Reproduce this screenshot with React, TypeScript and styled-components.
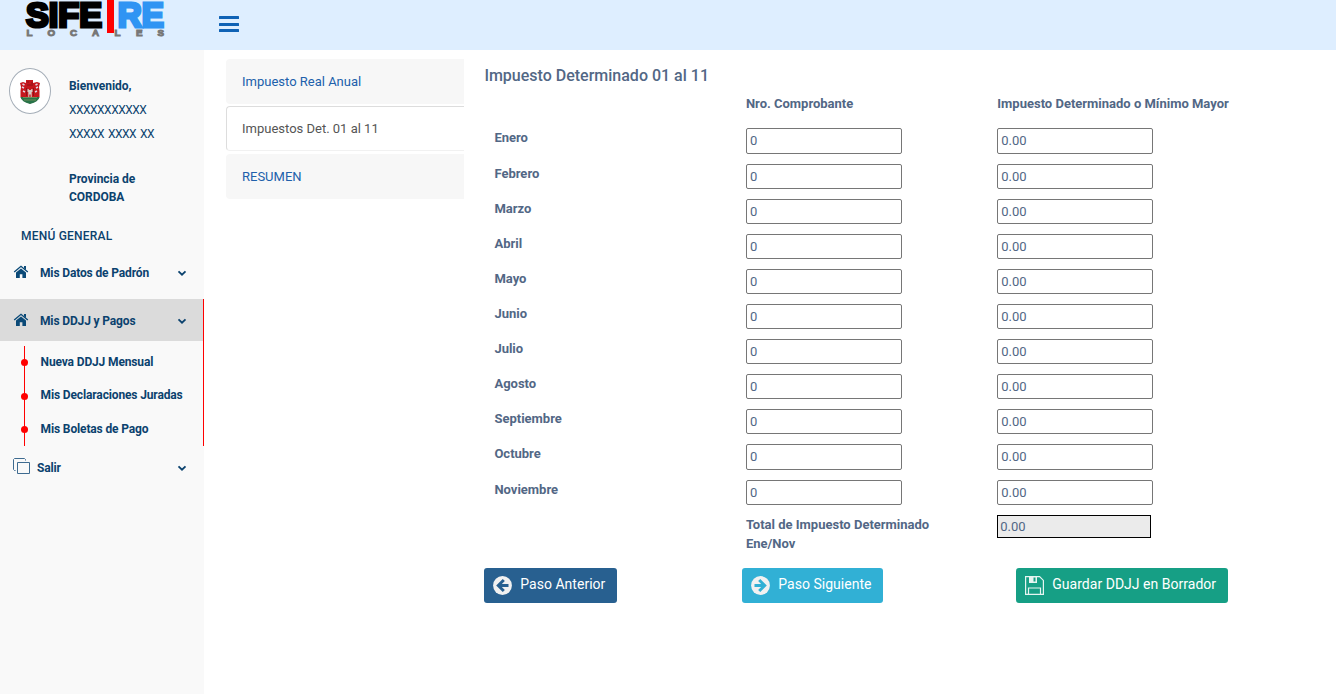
import React from "react";
import styled, { createGlobalStyle, css } from "styled-components";

const Global = createGlobalStyle`
  *, *::before, *::after { box-sizing: border-box; }
  body { margin: 0; background: #fff; font: 13px/19.1px Roboto, "Liberation Sans", sans-serif; color: #526785; }
`;

const Page = styled.div`min-height: 694px; display: flex; flex-direction: column;`;
const TopBar = styled.header`height: 50px; background: #deeeff; display: flex; align-items: flex-start;`;
const LogoBox = styled.div`width: 219.4px; height: 50px; padding-left: 22px; svg { display: block; overflow: visible; }`;
const MenuToggle = styled.button`
  margin-top: 16px; width: 20px; height: 17px; padding: 0; border: 0; background: none;
  display: flex; flex-direction: column; gap: 3.5px;
  span { display: block; flex: none; width: 20px; height: 3px; border-radius: 0.5px; background: #0f62b5; }
`;
const Body = styled.div`flex: 1; display: flex;`;

const Sidebar = styled.aside`
  width: 204px; background: #f9f9f9; color: #0b426e; font-size: 12px; font-weight: 700;
  display: flex; flex-direction: column;
`;
const Profile = styled.div`display: flex; padding: 18px 0 0 9px; height: 155px;`;
const Avatar = styled.div`
  width: 42px; height: 46px; border: 1px solid #a5aeb8; border-radius: 50%; background: #fff;
  display: flex; justify-content: center; padding-top: 10px;
`;
const ProfileText = styled.div`margin-left: 18px; padding-top: 9px; line-height: 18px; letter-spacing: -0.05px;`;
const UserLine = styled.div<{ $first?: boolean }>`
  font-weight: 400; line-height: 24px; margin-top: ${(p) => (p.$first ? "2.6px" : 0)}; white-space: pre;
  letter-spacing: -0.5px; word-spacing: 1.4px;
`;
const Province = styled.div`margin-top: 24.4px;`;
const MenuTitle = styled.div`
  padding-left: 21px; height: 45px; padding-top: 21px; line-height: 20px; font-weight: 500; letter-spacing: 0.22px;
`;
const MenuItem = styled.div<{ $height: number; $active?: boolean; $gap?: number }>`
  display: flex; align-items: center; height: ${(p) => p.$height}px; padding: 0 17px 0 13px;
  line-height: 18px; letter-spacing: -0.14px;
  ${(p) => p.$active && css`background: #dbdbdb; padding: 1px 16px 0 13px;`}
  > svg:first-child { margin-right: ${(p) => p.$gap ?? 11}px; }
  > svg:last-child { margin-left: auto; }
`;
const ActiveGroup = styled.div`border-right: 1px solid #f00; margin-top: 4px; height: 147px;`;
const SubMenu = styled.ul`
  list-style: none; margin: 5px 0 0 24px; padding: 0; height: 100px; border-left: 1px solid #f00;
`;
const SubItem = styled.li`
  height: 33.5px; line-height: 18px; padding: 6.6px 0 0 15.6px; position: relative; letter-spacing: -0.14px;
  &::before {
    content: ""; position: absolute; left: -4px; top: 13px; width: 7px; height: 7px;
    border-radius: 50%; background: #f00;
  }
`;

const Tabs = styled.nav`width: 238px; margin: 9px 0 0 22px; display: flex; flex-direction: column; gap: 2.4px;`;
const Tab = styled.a<{ $active?: boolean }>`
  height: 45.1px; line-height: 21px; padding: 12px 16px; border-radius: 4px 0 0 4px;
  background: #f7f7f7; color: #2060ab;
  ${(p) => p.$active && css`
    margin-top: -0.1px; background: #fff; color: #555; padding: 11px 15px; border: 1px solid #ddd;
    border-right: 0; border-bottom-color: #f1f1f1;
  `}
`;

const Main = styled.main`flex: 1; padding-left: 20.4px;`;
const Title = styled.h4`margin: 15px 0 0; font-size: 16px; line-height: 21px; font-weight: 500; height: 29px;`;
const Row = styled.div<{ $height?: number }>`
  display: grid; grid-template-columns: 251.5px 251.4px 300px; padding-left: 10px;
  height: ${(p) => p.$height ?? 35.11}px;
`;
const Label = styled.label`font-weight: 700;`;
const TotalLabel = styled(Label)`width: 200px;`;
const Field = styled.input`
  width: 156px; height: 25.11px; padding: 1px 3px; border: 1px solid #767676; border-radius: 2px;
  background: #fff; color: #526785; font: 13px Roboto, sans-serif;
`;
const TotalField = styled(Field)`
  width: 154px; height: 23px; padding: 1px 2px; border-color: #000; border-radius: 0; background: #ebebeb;
`;
const Actions = styled.div`display: flex; margin-top: 8px; margin-left: -0.4px; width: 744px;`;
const Button = styled.button<{ $width: number; $color: string; $space?: number }>`
  width: ${(p) => p.$width}px; height: 35px; margin: 0 0 0 ${(p) => p.$space ?? 0}px; padding: 0 0 3px 9px; border: 0;
  border-radius: 3px; background: ${(p) => p.$color}; color: #fff; display: flex; align-items: center;
  font: 14px Roboto, sans-serif; white-space: nowrap; letter-spacing: 0.02px;
  svg { flex: none; margin: 3px 8.3px 0 0; }
`;

const Logo = () => (
  <svg width="150" height="44" viewBox="0 0 150 44" fontFamily="Liberation Sans, sans-serif" fontWeight="700">
    <text x="4" y="27" fontSize="35" textLength="76" lengthAdjust="spacingAndGlyphs" fill="#000" stroke="#000" strokeWidth="3.2">SIFE</text>
    <text x="95.8" y="27" fontSize="35" textLength="46" lengthAdjust="spacingAndGlyphs" fill="#2f94f3" stroke="#2f94f3" strokeWidth="3.2">RE</text>
    <rect x="85" width="7" height="33" fill="#f00" />
    <text y="36" x="4.500 25.500 48 70 92.500 114 135.500" fontSize="9.800" fill="#777" stroke="#777" strokeWidth="1">LOCALES</text>
  </svg>
);

const Crest = () => (
  <svg width="22" height="26" viewBox="0 0 22 26">
    <path d="M1 4l3-1 3 1V1h7v3l4-1 3 1-1 4 .500 4v6q-2 4.500-9.500 6.500Q3.500 22.500 1.500 18v-6L2 8z" fill="#c5161d" />
    <path d="M1.500 18h19q-1 5-9.500 7-8.500-2-9.500-7z" fill="#277449" />
    <path d="M4 18.500h14M5 21h12" stroke="#6e8b57" />
    <path d="M9.300 18v-5h-.800v-3h1.300v1h2.400v-1h1.300v3h-.800v5h-1v-2.500h-1.400V18z" fill="#d8c9c6" />
    <path d="M3.500 5l2 1M3 8l2 1M4 12l2 1M18.500 5l-2 1M19 8l-2 1M18 12l-2 1" stroke="#e2d5e2" strokeWidth="1.500" />
    <path d="M8 3h2M12 4h2M8 6h6M7.500 9v8M14.500 9v8" stroke="#8d1219" />
  </svg>
);

const HomeIcon = () => (
  <svg width="16" height="18" viewBox="0 0 16 18" fill="#0b4a78">
    <path d="M8 4.400L13 8.600V14H9.400v-3.700H6.800V14H3V8.600z" />
    <path d="M1.200 8L8 2.300 14.800 8" fill="none" stroke="#0b4a78" strokeWidth="1.400" />
    <path d="M11 2h2v4l-2-1.700z" />
  </svg>
);

const Chevron = () => (
  <svg width="10" height="8" viewBox="0 0 10 8" fill="none" stroke="#0b426e" strokeWidth="1.800">
    <path d="M1.500 2.300L5 5.700l3.500-3.400" />
  </svg>
);

const CopyIcon = () => (
  <svg width="17" height="19" viewBox="0 0 17 19" fill="none" stroke="#3e6b90">
    <path d="M4.500 4.500h12v11h-12zM2.500 12.500h-1l-1-1v-10l1-1h10l1 1v1" />
  </svg>
);

const CircleArrow = ({ color, right }: { color: string; right?: boolean }) => (
  <svg width="19" height="19" viewBox="0 0 19 19">
    <circle cx="9.500" cy="9.500" r="9.400" fill="#f1f1f1" />
    <path
      d="M10.800 4L5.300 9.500l5.500 5.500M6 9.500h9.500"
      transform={right ? "matrix(-1 0 0 1 19 0)" : undefined}
      fill="none" stroke={color} strokeWidth="3"
    />
  </svg>
);

const SaveIcon = () => (
  <svg width="19" height="19" viewBox="0 0 19 19" fill="none" stroke="#e6f5f1" strokeWidth="1.200">
    <path d="M.600.600h14l3.800 3.800v14H.600zM3.500 18v-6h12v6" />
    <path d="M4 1h8v6H4z" fill="#e6f5f1" stroke="none" />
    <path d="M8.500 1.500h2v4h-2z" fill="#169f85" stroke="none" />
  </svg>
);

const MONTHS = ["Enero", "Febrero", "Marzo", "Abril", "Mayo", "Junio", "Julio", "Agosto", "Septiembre", "Octubre", "Noviembre"];

export default function App() {
  return (
    <Page>
      <Global />
      <TopBar>
        <LogoBox><Logo /></LogoBox>
        <MenuToggle aria-label="Menú"><span /><span /><span /></MenuToggle>
      </TopBar>
      <Body>
        <Sidebar>
          <Profile>
            <Avatar><Crest /></Avatar>
            <ProfileText>
              <div>Bienvenido,</div>
              <UserLine $first>XXXXXXXXXXX</UserLine>
              <UserLine>XXXXX XXXX XX</UserLine>
              <Province>Provincia de<br />CORDOBA</Province>
            </ProfileText>
          </Profile>
          <MenuTitle>MENÚ GENERAL</MenuTitle>
          <MenuItem $height={45}><HomeIcon />Mis Datos de Padrón<Chevron /></MenuItem>
          <ActiveGroup>
            <MenuItem $height={42} $active><HomeIcon />Mis DDJJ y Pagos<Chevron /></MenuItem>
            <SubMenu>
              <SubItem>Nueva DDJJ Mensual</SubItem>
              <SubItem>Mis Declaraciones Juradas</SubItem>
              <SubItem>Mis Boletas de Pago</SubItem>
            </SubMenu>
          </ActiveGroup>
          <MenuItem $height={43} $gap={7}><CopyIcon />Salir<Chevron /></MenuItem>
        </Sidebar>
        <Tabs>
          <Tab>Impuesto Real Anual</Tab>
          <Tab $active>Impuestos Det. 01 al 11</Tab>
          <Tab>RESUMEN</Tab>
        </Tabs>
        <Main>
          <Title>Impuesto Determinado 01 al 11</Title>
          <Row $height={34.45}>
            <span />
            <Label>Nro. Comprobante</Label>
            <Label>Impuesto Determinado o Mínimo Mayor</Label>
          </Row>
          {MONTHS.map((m) => (
            <Row key={m}>
              <Label>{m}</Label>
              <Field defaultValue="0" />
              <Field defaultValue="0.00" />
            </Row>
          ))}
          <Row $height={45.4}>
            <span />
            <TotalLabel>Total de Impuesto Determinado Ene/Nov</TotalLabel>
            <TotalField defaultValue="0.00" readOnly />
          </Row>
          <Actions>
            <Button $width={133} $color="#286090"><CircleArrow color="#286090" />Paso Anterior</Button>
            <Button $width={141} $space={125} $color="#31b0d5"><CircleArrow color="#31b0d5" right />Paso Siguiente</Button>
            <Button $width={212} $space={133} $color="#169f85"><SaveIcon />Guardar DDJJ en Borrador</Button>
          </Actions>
        </Main>
      </Body>
    </Page>
  );
}
